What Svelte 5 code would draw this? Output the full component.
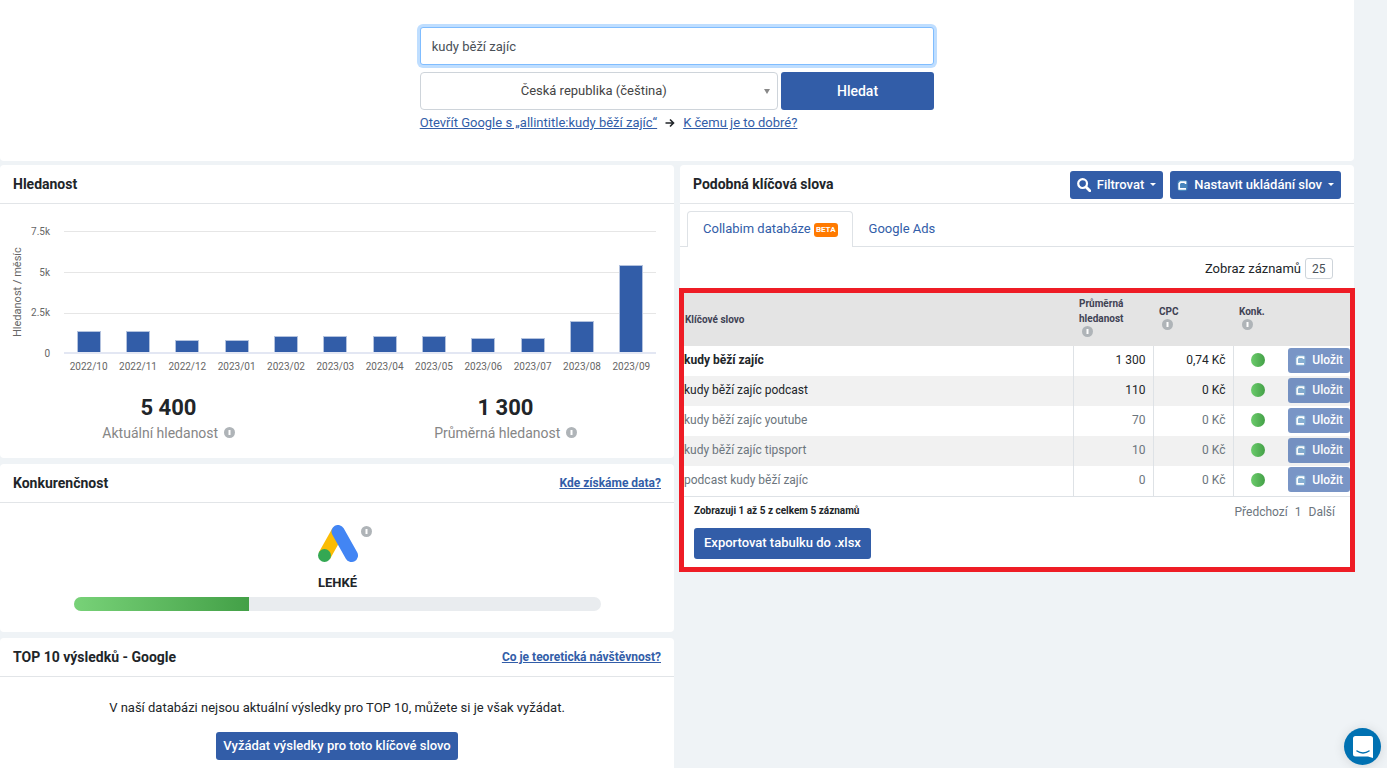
<script>
  let query = "kudy běží zajíc";
  let country = "cs";
  let pageLength = "25";
  let activeTab = "collabim";

  const chartMax = 7500;
  const ticks = ["7.5k", "5k", "2.5k", "0"];

  const months = [
    { label: "2022/10", value: 1300 },
    { label: "2022/11", value: 1300 },
    { label: "2022/12", value: 720 },
    { label: "2023/01", value: 720 },
    { label: "2023/02", value: 1000 },
    { label: "2023/03", value: 1000 },
    { label: "2023/04", value: 1000 },
    { label: "2023/05", value: 1000 },
    { label: "2023/06", value: 880 },
    { label: "2023/07", value: 880 },
    { label: "2023/08", value: 1900 },
    { label: "2023/09", value: 5400 },
  ];

  const keywords = [
    { name: "kudy běží zajíc", volume: "1 300", cpc: "0,74 Kč", kind: "main" },
    { name: "kudy běží zajíc podcast", volume: "110", cpc: "0 Kč", kind: "" },
    { name: "kudy běží zajíc youtube", volume: "70", cpc: "0 Kč", kind: "muted" },
    { name: "kudy běží zajíc tipsport", volume: "10", cpc: "0 Kč", kind: "muted" },
    { name: "podcast kudy běží zajíc", volume: "0", cpc: "0 Kč", kind: "muted" },
  ];
</script>

{#snippet info()}
  <svg class="info" viewBox="0 0 11 11" width="11" height="11" aria-hidden="true">
    <circle cx="5.5" cy="5.5" r="5.5" fill="#afb4b8" />
    <path d="M4.5 3h2v5h-2z" fill="#fff" />
  </svg>
{/snippet}

{#snippet mark()}
  <svg class="mark" viewBox="0 0 11 12" width="11" height="12" aria-hidden="true">
    <rect x="0.5" y="1" width="10" height="11" rx="3" fill="#4f97c4" opacity="0.7" />
    <path d="M8.5 5V3.2H3.6L2.2 4.6v5.2H9" fill="none" stroke="#fff" stroke-width="1.7" />
  </svg>
{/snippet}

<div class="page">
  <section class="search">
    <form class="search-form" on:submit|preventDefault>
      <input class="query" type="text" aria-label="Klíčové slovo" bind:value={query} />
      <div class="search-row">
        <div class="country">
          <select aria-label="Země" bind:value={country}>
            <option value="cs">Česká republika (čeština)</option>
          </select>
          <span class="arrow"></span>
        </div>
        <button class="btn submit" type="submit">Hledat</button>
      </div>
      <div class="hints">
        <a href="#allintitle">Otevřít Google s „allintitle:kudy běží zajíc“</a>
        <svg viewBox="0 0 10 10" width="10" height="10" aria-hidden="true">
          <path d="M0.5 5H8.5M5 1.5L8.5 5L5 8.5" fill="none" stroke="#212529" stroke-width="1.6" />
        </svg>
        <a href="#help">K čemu je to dobré?</a>
      </div>
    </form>
  </section>

  <div class="columns">
    <div class="column">
      <section class="card">
        <header><h2>Hledanost</h2></header>
        <div class="chart">
          <div class="axis-title">Hledanost / měsíc</div>
          <div class="ticks">
            {#each ticks as tick}
              <span>{tick}</span>
            {/each}
          </div>
          <div class="plot">
            <div class="bars">
              {#each months as month}
                <div class="slot">
                  <div class="bar" style="height: {(month.value / chartMax) * 100}%"></div>
                </div>
              {/each}
            </div>
            <div class="labels">
              {#each months as month}
                <span>{month.label}</span>
              {/each}
            </div>
          </div>
        </div>
        <div class="stats">
          <div>
            <strong>5 400</strong>
            <span>Aktuální hledanost {@render info()}</span>
          </div>
          <div>
            <strong>1 300</strong>
            <span>Průměrná hledanost {@render info()}</span>
          </div>
        </div>
      </section>

      <section class="card">
        <header>
          <h2>Konkurenčnost</h2>
          <a href="#data">Kde získáme data?</a>
        </header>
        <div class="competition">
          <div class="ads">
            <svg viewBox="0 0 40 37" width="40" height="37" aria-hidden="true">
              <path d="M20 6.5L6.5 30.5" stroke="#fbbc04" stroke-width="13" />
              <path d="M20 6.5L33.5 30.5" stroke="#4285f4" stroke-width="13" stroke-linecap="round" />
              <circle cx="6.5" cy="30.5" r="6.5" fill="#34a853" />
            </svg>
            <span class="ads-info">{@render info()}</span>
          </div>
          <strong>LEHKÉ</strong>
          <div class="progress"><div style="width: 33.3%"></div></div>
        </div>
      </section>

      <section class="card">
        <header>
          <h2>TOP 10 výsledků - Google</h2>
          <a href="#traffic">Co je teoretická návštěvnost?</a>
        </header>
        <div class="results">
          <p>V naší databázi nejsou aktuální výsledky pro TOP 10, můžete si je však vyžádat.</p>
          <button class="btn" type="button">Vyžádat výsledky pro toto klíčové slovo</button>
        </div>
      </section>
    </div>

    <div class="column">
      <section class="card">
        <header>
          <h2>Podobná klíčová slova</h2>
          <div class="actions">
            <button class="btn" type="button">
              <svg viewBox="0 0 14 14" width="14" height="14" aria-hidden="true">
                <circle cx="5.6" cy="5.6" r="4.4" fill="none" stroke="#fff" stroke-width="2.2" />
                <path d="M9 9l3.8 3.8" stroke="#fff" stroke-width="2.8" stroke-linecap="round" />
              </svg>
              Filtrovat
              <span class="caret"></span>
            </button>
            <button class="btn" type="button">
              {@render mark()}
              Nastavit ukládání slov
              <span class="caret"></span>
            </button>
          </div>
        </header>
        <div class="tabs">
          <button
            type="button"
            class:active={activeTab === "collabim"}
            on:click={() => (activeTab = "collabim")}>
            Collabim databáze <span class="badge">BETA</span>
          </button>
          <button
            type="button"
            class:active={activeTab === "ads"}
            on:click={() => (activeTab = "ads")}>
            Google Ads
          </button>
        </div>
        <div class="length">
          <label for="length">Zobraz záznamů</label>
          <select id="length" bind:value={pageLength}>
            <option value="25">25</option>
          </select>
        </div>
        <div class="highlight">
          <table>
            <colgroup>
              <col />
              <col class="col-num" />
              <col class="col-num" />
              <col class="col-konk" />
              <col class="col-save" />
            </colgroup>
            <thead>
              <tr>
                <th>Klíčové slovo</th>
                <th>Průměrná hledanost <span>{@render info()}</span></th>
                <th>CPC <span>{@render info()}</span></th>
                <th>Konk. <span>{@render info()}</span></th>
                <th></th>
              </tr>
            </thead>
            <tbody>
              {#each keywords as keyword}
                <tr class={keyword.kind}>
                  <td class="name">{keyword.name}</td>
                  <td class="num">{keyword.volume}</td>
                  <td class="num">{keyword.cpc}</td>
                  <td class="konk"><span class="dot"></span></td>
                  <td class="save">
                    <button class="btn" type="button">{@render mark()} Uložit</button>
                  </td>
                </tr>
              {/each}
            </tbody>
          </table>
          <div class="table-foot">
            <strong>Zobrazuji 1 až 5 z celkem 5 záznamů</strong>
            <nav>
              <a href="#prev">Předchozí</a>
              <a href="#page-1">1</a>
              <a href="#next">Další</a>
            </nav>
          </div>
          <button class="btn export" type="button">Exportovat tabulku do .xlsx</button>
        </div>
      </section>
    </div>
  </div>

  <button class="chat" type="button" aria-label="Chat">
    <svg viewBox="0 0 20 22" width="20" height="22" aria-hidden="true">
      <path d="M2.5 0h15A2.5 2.5 0 0 1 20 2.5V22l-5-1.5H2.5A2.5 2.5 0 0 1 0 18V2.5A2.5 2.5 0 0 1 2.5 0z" fill="#fff" />
      <path d="M4 15c3.5 2.6 8.5 2.6 12 0" fill="none" stroke="#0071b2" stroke-width="1.5" stroke-linecap="round" />
    </svg>
  </button>
</div>

<style>
  :global(body) {
    margin: 0;
    background: #eff3f6;
    overflow: hidden;
  }

  .page {
    padding-right: 33px;
    font-family: Roboto, "Liberation Sans", sans-serif;
    font-size: 13px;
    line-height: 20px;
    color: #212529;
  }

  .page * {
    box-sizing: border-box;
  }

  button,
  input,
  select {
    font-family: inherit;
    font-size: inherit;
    line-height: inherit;
    color: inherit;
    margin: 0;
  }

  a {
    color: #325da8;
  }

  h2 {
    margin: 0;
    font-size: 14px;
    font-weight: 700;
  }

  .btn {
    display: inline-flex;
    align-items: center;
    justify-content: center;
    gap: 6px;
    height: 28px;
    padding: 0 7px;
    border: 0;
    border-radius: 3px;
    background: #325da8;
    color: #fff;
    font-weight: 500;
    white-space: nowrap;
    cursor: pointer;
  }

  .search {
    padding: 27px 0 28px;
    background: #fff;
    border-radius: 0 0 4px 4px;
  }

  .search-form {
    width: 38%;
    margin: 0 auto;
  }

  .query {
    display: block;
    width: 100%;
    height: 38px;
    padding: 0 11px;
    border: 1px solid #80bdff;
    border-radius: 3px;
    outline: 0;
    box-shadow: 0 0 0 3px #bfdeff;
    color: #495057;
  }

  .search-row {
    display: grid;
    grid-template-columns: 7fr 3fr;
    gap: 3px;
    margin-top: 7px;
  }

  .country {
    position: relative;
  }

  .country select {
    width: 100%;
    height: 38px;
    padding: 0 20px 0 10px;
    border: 1px solid #ced4da;
    border-radius: 4px;
    background: #fff;
    color: #444;
    appearance: none;
    text-align-last: center;
  }

  .arrow {
    position: absolute;
    top: 17px;
    right: 8px;
    border: 3px solid transparent;
    border-top: 5px solid #888;
    border-bottom: 0;
    pointer-events: none;
  }

  .submit {
    height: 38px;
    font-size: 14px;
  }

  .hints {
    display: flex;
    align-items: center;
    gap: 8px;
    margin-top: 3px;
  }

  .columns {
    display: grid;
    grid-template-columns: 1fr 1fr;
    align-items: start;
    gap: 6px;
    margin-top: 4px;
  }

  .column {
    display: grid;
    gap: 6px;
    min-width: 0;
  }

  .card {
    background: #fff;
    border-radius: 4px;
  }

  .card header {
    display: flex;
    align-items: center;
    justify-content: space-between;
    height: 39px;
    padding: 0 13px;
    border-bottom: 1px solid #e2e5e8;
  }

  header a {
    font-size: 12px;
    font-weight: 700;
  }

  .chart {
    display: flex;
    padding: 27px 18px 0 8px;
    color: #666;
    font-size: 10px;
  }

  .axis-title {
    width: 20px;
    height: 122px;
    line-height: 20px;
    font-size: 11px;
    writing-mode: vertical-rl;
    transform: rotate(180deg);
    text-align: center;
  }

  .ticks {
    display: flex;
    flex-direction: column;
    justify-content: space-between;
    width: 22px;
    height: 142px;
    margin: -9px 14px 0 0;
    text-align: right;
  }

  .plot {
    flex: 1;
  }

  .bars,
  .labels {
    display: grid;
    grid-template-columns: repeat(12, 1fr);
  }

  .bars {
    height: 123px;
    border-bottom: 2px solid #e3e7f3;
    background: linear-gradient(#e6e6e6 1px, transparent 1px) 0 0 / 100% 41px;
  }

  .slot {
    display: flex;
    align-items: flex-end;
    justify-content: center;
    height: 100%;
  }

  .bar {
    width: 24px;
    background: #325da8;
    border: 1px solid #b3c2de;
    border-bottom: 0;
  }

  .labels {
    padding-top: 3px;
    text-align: center;
    white-space: nowrap;
  }

  .stats {
    display: grid;
    grid-template-columns: 1fr 1fr;
    padding: 17px 0 14px;
    text-align: center;
  }

  .stats div {
    display: grid;
  }

  .stats strong {
    font-size: 22px;
    line-height: 28px;
    font-weight: 700;
  }

  .stats span {
    font-size: 14px;
    line-height: 22px;
    color: #868686;
  }

  .stats .info {
    margin-left: 2px;
  }

  .competition {
    display: flex;
    flex-direction: column;
    align-items: center;
    padding: 22px 73px 21px 74px;
  }

  .competition strong {
    margin-top: 11px;
  }

  .ads {
    position: relative;
    height: 37px;
  }

  .ads-info {
    position: absolute;
    top: -2px;
    left: 43px;
  }

  .progress {
    width: 100%;
    height: 14px;
    margin-top: 4px;
    border-radius: 7px;
    background: #e9ecef;
    overflow: hidden;
  }

  .progress div {
    height: 100%;
    background: linear-gradient(to right, #78d278, #43a047);
  }

  .results {
    padding: 21px 0 40px;
    text-align: center;
  }

  .results p {
    margin: 0 0 14px;
  }

  .actions {
    display: flex;
    gap: 7px;
    padding-top: 1px;
  }

  .caret {
    border: 3px solid transparent;
    border-top-color: #fff;
    border-bottom: 0;
  }

  .tabs {
    display: flex;
    height: 43px;
    padding: 7px 7px 0;
    border-bottom: 1px solid #dee2e6;
  }

  .tabs button {
    height: 36px;
    padding: 0 14px 2px 15px;
    border: 1px solid transparent;
    border-bottom: 0;
    border-radius: 4px 4px 0 0;
    background: transparent;
    color: #325da8;
    cursor: pointer;
  }

  .tabs .active {
    border-color: #dee2e6;
    background: #fff;
  }

  .badge {
    display: inline-block;
    padding: 0 2px;
    border-radius: 3px;
    background: #ff7a00;
    color: #fff;
    font-size: 8px;
    line-height: 14px;
    font-weight: 700;
    vertical-align: 1px;
  }

  .length {
    display: flex;
    align-items: center;
    justify-content: flex-end;
    gap: 4px;
    height: 41px;
    padding: 2px 21px 0 0;
  }

  .length select {
    height: 21px;
    padding: 0 6px;
    border: 1px solid #ced4da;
    border-radius: 3px;
    background: #fff;
    color: #495057;
    font-size: 12px;
    appearance: none;
  }

  .highlight {
    margin: 0 -1px;
    border: 5px solid #ee1c25;
    padding-bottom: 8px;
  }

  table {
    width: 100%;
    table-layout: fixed;
    border-collapse: collapse;
    border-bottom: 1px solid #dee2e6;
    font-size: 12px;
  }

  .col-num {
    width: 80px;
  }

  .col-konk {
    width: 49px;
  }

  .col-save {
    width: 68px;
  }

  th {
    height: 53px;
    padding: 0 6px 1px;
    background: #e4e4e4;
    color: #3f4254;
    font-size: 10px;
    line-height: 15px;
    text-align: left;
  }

  th:first-child {
    padding-left: 1px;
  }

  th span {
    display: block;
    height: 16px;
    margin-left: 3px;
  }

  th .info {
    display: block;
  }

  td {
    height: 30px;
    padding: 0 0 2px;
  }

  tbody tr:nth-child(even) {
    background: #f1f1f1;
  }

  .main .name {
    font-weight: 700;
  }

  .muted {
    color: #6c757d;
  }

  .num {
    padding-right: 7px;
    border-left: 1px solid #dee2e6;
    text-align: right;
  }

  .konk {
    border-left: 1px solid #dee2e6;
  }

  .dot {
    display: block;
    width: 14px;
    height: 14px;
    margin: 0 auto;
    border-radius: 50%;
    background: linear-gradient(to right, #6ccc6c, #43a047);
  }

  .save .btn {
    display: flex;
    height: 25px;
    margin-left: auto;
    opacity: 0.65;
  }

  .table-foot {
    display: flex;
    justify-content: space-between;
    padding: 4px 15px 0 10px;
    color: #6c757d;
    font-size: 12px;
  }

  .table-foot strong {
    color: #212529;
    font-size: 10px;
  }

  .table-foot nav {
    display: flex;
    gap: 7px;
    padding-top: 1px;
  }

  .table-foot a {
    color: inherit;
    text-decoration: none;
  }

  .export {
    height: 31px;
    margin: 6px 0 0 10px;
    padding: 0 10px;
  }

  .chat {
    position: fixed;
    right: 6px;
    bottom: 3px;
    display: grid;
    place-items: center;
    width: 37px;
    height: 37px;
    padding: 0;
    border: 0;
    border-radius: 50%;
    background: #0071b2;
    box-shadow: 0 1px 12px rgba(0, 0, 0, 0.12);
    cursor: pointer;
  }
</style>
